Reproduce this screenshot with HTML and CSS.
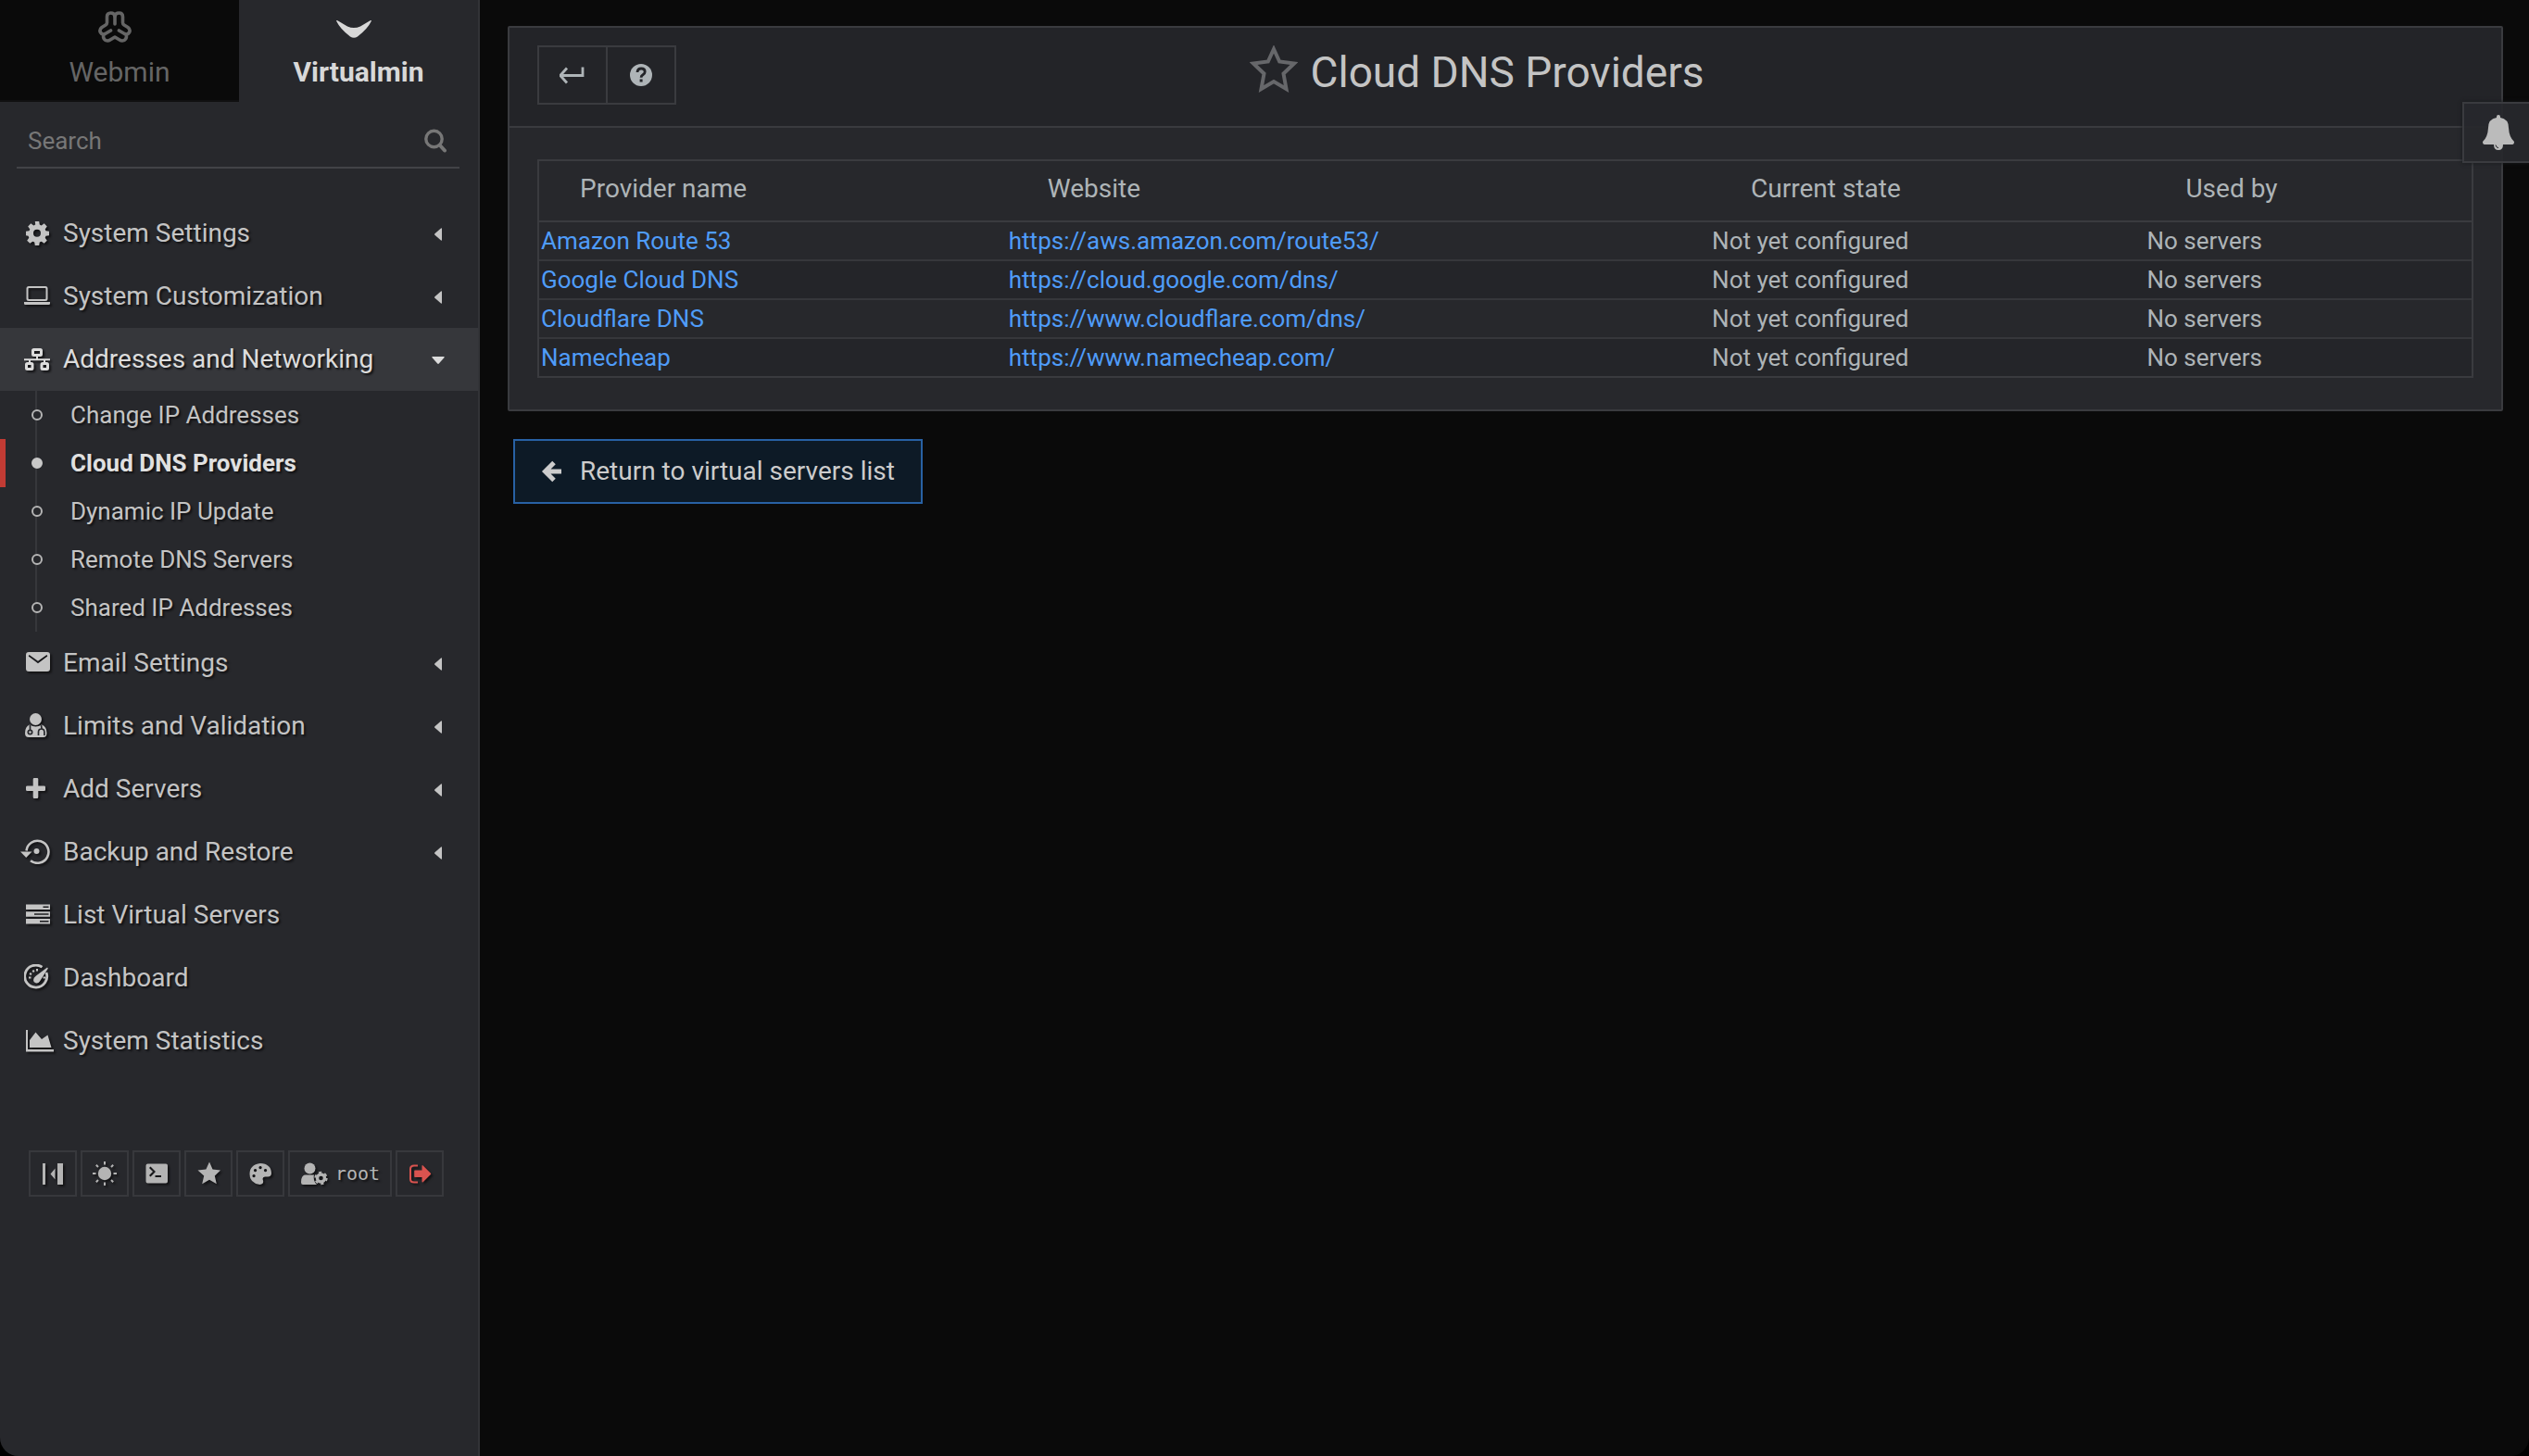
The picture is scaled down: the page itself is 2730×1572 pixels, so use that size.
FILE: index.html
```html
<!DOCTYPE html>
<html lang="en">
<head>
<meta charset="utf-8">
<title>Cloud DNS Providers</title>
<link rel="stylesheet" href="styles.css">
</head>
<body>
<svg class="sprite" aria-hidden="true">
  <symbol id="caret-left" viewBox="0 0 8 14"><path d="M8 1v12q0 1-1 .6L.4 7.8q-.7-.8 0-1.600L7 .4Q8 0 8 1z"/></symbol>
  <symbol id="caret-down" viewBox="0 0 14 8"><path d="M1 0h12q1 0 .6 1L7.800 7.600q-.8.700-1.600 0L.4 1Q0 0 1 0z"/></symbol>
</svg>
<div class="app">
  <aside class="sidebar">
    <nav class="tabs" aria-label="Products">
      <a class="tab" href="#webmin">
        <svg class="tab-icon" viewBox="0 0 36 34"><g fill="none" stroke="currentColor" stroke-width="3.600" stroke-linecap="round" stroke-linejoin="round"><path d="M18 14V5.500Q17.500 2 13.500 2 9.500 2 9.500 6v6.500Q9.500 14 8 15l-4 2.500Q.8 20 2.500 23t5 1.500l6-3.500"/><path d="M18 5.500Q18.500 2 22.500 2t4 4v6.500Q26.500 14 28 15l4 2.500q3.200 2.500 1.500 5.500t-5 1.500l-6-3.500"/><path d="M5.500 25.500Q5 31.500 10 32q1.500 0 3-1l5-3 5 3q1.500 1 3 1 5-.500 4.500-6.500"/></g></svg>
        <span>Webmin</span>
      </a>
      <a class="tab tab-active" href="#virtualmin" aria-current="page">
        <svg class="tab-icon" viewBox="0 0 38 34"><path fill="currentColor" d="M0 10.500Q0 9.500 1.500 10.200L12 16.500q7 3 14 0L36.500 10.200Q38 9.500 38 10.500 34 19 23 27.500q-4 2.500-8 0Q4 19 0 10.500z"/></svg>
        <span>Virtualmin</span>
      </a>
    </nav>
    <form class="search" role="search">
      <input class="search-input" type="search" placeholder="Search" aria-label="Search">
      <svg class="search-icon" viewBox="0 0 24 26"><g fill="none" stroke="currentColor" stroke-linecap="round"><circle cx="10.500" cy="11" r="8.700" stroke-width="3.400"/><path d="M17 18l5 5.500" stroke-width="4"/></g></svg>
    </form>
    <nav class="menu" aria-label="Virtualmin">
      <a class="item" href="#system-settings"><svg class="icon" viewBox="0 0 28 28"><path fill-rule="evenodd" d="M11.800 2h4.400l.6 3.600 1.900.8 3-2.100 3.100 3.100-2.100 3 .8 1.900 3.500.5v4.400l-3.500.6-.8 1.900 2.100 3-3.100 3.100-3-2.100-1.900.8-.6 3.500h-4.400l-.6-3.500-1.900-.8-3 2.100-3.100-3.100 2.100-3-.8-1.900L2 17.200v-4.400l3.500-.5.8-1.900-2.100-3 3.100-3.100 3 2.100 1.900-.8zM14 10.800a4 4 0 1 0 0 8 4 4 0 0 0 0-8z"/></svg><span>System Settings</span><svg class="caret"><use href="#caret-left"/></svg></a>
      <a class="item" href="#system-customization"><svg class="icon" viewBox="0 0 28 28"><path fill-rule="evenodd" d="M5 4h18q2.500 0 2.500 2.500v11q0 2.500-2.500 2.500H5q-2.500 0-2.500-2.500v-11Q2.500 4 5 4zm.2 2q-.7 0-.7.700v10.600q0 .7.7.7h17.600q.7 0 .7-.7V6.700q0-.7-.7-.7zM0 21h28v2q0 1-1.500 1h-25Q0 24 0 23z"/></svg><span>System Customization</span><svg class="caret"><use href="#caret-left"/></svg></a>
      <a class="item item-open" href="#addresses"><svg class="icon" viewBox="0 0 28 28"><g fill="none" stroke="currentColor"><rect x="9.500" y="4.500" width="9" height="6" rx="1" stroke-width="3"/><rect x="2.500" y="19.500" width="6.500" height="6" rx="1" stroke-width="3"/><rect x="19" y="19.500" width="6.500" height="6" rx="1" stroke-width="3"/><path d="M0 15.200h28M14 11.500v4M6 15v4M22 15v4" stroke-width="2"/></g></svg><span>Addresses and Networking</span><svg class="caret caret-open"><use href="#caret-down"/></svg></a>
      <ul class="submenu">
        <li><a class="subitem" href="#change-ip">Change IP Addresses</a></li>
        <li><a class="subitem subitem-active" href="#cloud-dns" aria-current="page">Cloud DNS Providers</a></li>
        <li><a class="subitem" href="#dynamic-ip">Dynamic IP Update</a></li>
        <li><a class="subitem" href="#remote-dns">Remote DNS Servers</a></li>
        <li><a class="subitem" href="#shared-ip">Shared IP Addresses</a></li>
      </ul>
      <a class="item" href="#email"><svg class="icon" viewBox="0 0 28 28"><path fill-rule="evenodd" d="M5 3h20q3 0 3 3v15q0 3-3 3H5q-3 0-3-3V6q0-3 3-3zm.5 3L4.700 7.500 15 15.200 25.300 7.500 24.500 6 15 12.700z"/></svg><span>Email Settings</span><svg class="caret"><use href="#caret-left"/></svg></a>
      <a class="item" href="#limits"><svg class="icon" viewBox="0 0 28 28"><circle cx="12.500" cy="7.500" r="6.500"/><path d="M6 13.500q6.500 4 13 0 5.500 2 5.500 9 0 4.500-4 4.500H5q-4 0-4-4.500 0-7 5-9z"/><g fill="none" stroke="#27282c" stroke-width="1.700"><path d="M6.500 14v5.500M18.500 14l.5 3.500M15.500 25v-3.500q0-3.500 3.200-3.500t3.200 3.500V25"/><circle cx="6.500" cy="21.500" r="2.200"/></g></svg><span>Limits and Validation</span><svg class="caret"><use href="#caret-left"/></svg></a>
      <a class="item" href="#add-servers"><svg class="icon" viewBox="0 0 28 28"><path d="M11 3h3q1.300 0 1.300 1.300v7.200h6.200q1.500 0 1.500 1.300v3q0 1.200-1.500 1.200h-6.200v6.500q0 1.500-1.300 1.500h-3q-1.300 0-1.300-1.500V17H3.500Q2 17 2 15.800v-3q0-1.300 1.500-1.300h6.200V4.300Q9.700 3 11 3z"/></svg><span>Add Servers</span><svg class="caret"><use href="#caret-left"/></svg></a>
      <a class="item" href="#backup"><svg class="icon icon-wide" viewBox="0 0 32 28"><path d="M6.500 13.500A12 12 0 1 1 11 24.200" fill="none" stroke="currentColor" stroke-width="2.600"/><path d="M0 14.500h12.500L6.200 21z"/><circle cx="17.500" cy="14" r="3"/></svg><span>Backup and Restore</span><svg class="caret"><use href="#caret-left"/></svg></a>
      <a class="item" href="#list"><svg class="icon" viewBox="0 0 28 28"><path fill-rule="evenodd" d="M2 3.500h26v5.500H2zm18.500 2v1.500h6V5.500zM2 11.200h26v5.500H2zm9 2v1.500h15.500v-1.500zM2 18.900h26v5.500H2zm15 2v1.500h9.500v-1.500z"/></svg><span>List Virtual Servers</span></a>
      <a class="item" href="#dashboard"><svg class="icon" viewBox="0 0 28 28"><path d="M19.500 3.200A12 12 0 1 0 24 9" fill="none" stroke="currentColor" stroke-width="2.800"/><path d="M25 3.500q1.200.5.600 1.500L17 18.500q-2 3-5 1.500t-1.300-5Q11 14 13 12.500z"/><path d="M5 14.500h2.500M6 10l2 1M9.500 6.500l1.200 2M14 5v2.400M20.500 14.500H23" fill="none" stroke="currentColor" stroke-width="2"/></svg><span>Dashboard</span></a>
      <a class="item" href="#stats"><svg class="icon icon-chart" viewBox="0 0 32 28"><path d="M2 3h2v21h28v2.500H2zM6 22V14L12.500 5.500 19 13l6.500-4.500L29.500 22z"/></svg><span>System Statistics</span></a>
    </nav>
    <div class="tools">
      <button class="tool" type="button" aria-label="Collapse menu"><svg viewBox="0 0 26 26"><path d="M2 2h3v23H2zM18 2h6v23h-6zM15.500 7.500v12L10.500 13.500z"/></svg></button>
      <button class="tool" type="button" aria-label="Light mode"><svg viewBox="0 0 26 26"><circle cx="13" cy="13" r="7.200"/><path d="M13 0v3.500M13 22.500V26M0 13h3.500M22.500 13H26M3.800 3.800L6 6M20 20l2.200 2.200M22.200 3.800L20 6M6 20l-2.200 2.200" fill="none" stroke="currentColor" stroke-width="2"/></svg></button>
      <button class="tool" type="button" aria-label="Terminal"><svg viewBox="0 0 26 26"><path fill-rule="evenodd" d="M3.500 2.500H23q2 0 2 2v17q0 2-2 2H3.500q-2 0-2-2v-17q0-2 2-2zM5 7L9 11l-4 4L6.500 16.500 12 11 6.500 5.500zM11.500 15v2h6.500v-2z"/></svg></button>
      <button class="tool" type="button" aria-label="Favorites"><svg viewBox="0 0 26 26"><path d="M14 .5l3.600 8 8.400.9-6.200 6 2 8.800L14 19.700 6.200 24.200l2-8.800-6.700-6 8.900-.9z"/></svg></button>
      <button class="tool" type="button" aria-label="Theme"><svg viewBox="0 0 26 26"><path fill-rule="evenodd" d="M13 2q11.500.5 12 10.500 0 4-4 4h-3q-3.500.5-2 4 1 4-3.500 4.500Q1.500 23.500 1.500 13.500T13 2zM6 14a1.600 1.600 0 1 0 .1 0zM7.500 8a1.600 1.600 0 1 0 .1 0zM13 5a1.600 1.600 0 1 0 .1 0zM18.500 8a1.600 1.600 0 1 0 .1 0z"/></svg></button>
      <button class="tool tool-user" type="button"><svg class="user-icon" viewBox="0 0 30 26"><circle cx="10.500" cy="7.500" r="6"/><path d="M6 14.500h9q-1.500 6 3 10.500H3q-2 0-2-2.500 0-8 5-8z"/><circle cx="22.500" cy="18" r="4" fill="none" stroke="currentColor" stroke-width="3.400"/><circle cx="22.500" cy="18" r="6.200" fill="none" stroke="currentColor" stroke-width="2" stroke-dasharray="3.200 3.290"/></svg><span>root</span></button>
      <button class="tool tool-logout" type="button" aria-label="Log out"><svg viewBox="0 0 26 26"><path d="M11 4.500H7Q3 4.500 3 8v11q0 3.500 4 3.500h4" fill="none" stroke="currentColor" stroke-width="2"/><path d="M8 9.500h7.500V5q0-1.500 1.200-.6l8 8q1 .9 0 1.800l-8 8q-1.200 1-1.200-.6v-4.500H8q-.8 0-.8-.8v-6q0-.8.8-.8z"/></svg></button>
    </div>
  </aside>

  <main class="content">
    <section class="panel">
      <header class="panel-head">
        <div class="actions">
          <button class="action" type="button" aria-label="Back"><svg viewBox="0 0 28 24"><path d="M25 3.500v9H0M8 4.500L.8 12.500l7.200 8" fill="none" stroke="currentColor" stroke-width="2.800"/></svg></button>
          <button class="action" type="button" aria-label="Help"><svg viewBox="0 0 28 24"><circle cx="14" cy="12" r="12"/><path d="M10 9q.3-4 4.200-4 4 0 4 3.400 0 2-2.200 3.300-1.900 1.100-1.900 3.100" fill="none" stroke="#232428" stroke-width="2.800"/><path d="M12.600 16.500h3v3h-3z" fill="#232428"/></svg></button>
        </div>
        <h1 class="title"><svg class="star" viewBox="0 0 52 52"><path d="M26 4l6.200 13.500 15.800 2L36.500 30.500l3 16.500-13.500-8-13.500 8 3-16.500L4 19.500l15.800-2z" fill="none" stroke="currentColor" stroke-width="4"/></svg><span>Cloud DNS Providers</span></h1>
      </header>
      <div class="panel-body">
        <table class="providers">
          <colgroup><col class="c-name"><col class="c-site"><col class="c-state"><col class="c-used"></colgroup>
          <thead><tr><th scope="col">Provider name</th><th scope="col">Website</th><th scope="col">Current state</th><th scope="col">Used by</th></tr></thead>
          <tbody>
            <tr><td><a href="#route53">Amazon Route 53</a></td><td><a href="https://aws.amazon.com/route53/">https://aws.amazon.com/route53/</a></td><td>Not yet configured</td><td>No servers</td></tr>
            <tr><td><a href="#google">Google Cloud DNS</a></td><td><a href="https://cloud.google.com/dns/">https://cloud.google.com/dns/</a></td><td>Not yet configured</td><td>No servers</td></tr>
            <tr><td><a href="#cloudflare">Cloudflare DNS</a></td><td><a href="https://www.cloudflare.com/dns/">https://www.cloudflare.com/dns/</a></td><td>Not yet configured</td><td>No servers</td></tr>
            <tr><td><a href="#namecheap">Namecheap</a></td><td><a href="https://www.namecheap.com/">https://www.namecheap.com/</a></td><td>Not yet configured</td><td>No servers</td></tr>
          </tbody>
        </table>
      </div>
    </section>
    <a class="return" href="#servers"><svg class="return-icon" viewBox="0 0 24 24"><path d="M14 2.500L4.500 12l9.500 9.500M5.500 12H22" fill="none" stroke="currentColor" stroke-width="5"/></svg><span>Return to virtual servers list</span></a>
  </main>
  <button class="bell" type="button" aria-label="Notifications"><svg viewBox="0 0 34 38"><path d="M17 0q2 0 2 2v1q9 1.500 9 11 .5 10 6 15 0 3-2 3H22q0 6-5 6t-5-6H2q-2 0-2-3 5.500-5 6-15 0-9.500 9-11V2q0-2 2-2z"/><path d="M14 32.500q.3 2.700 3 3.200" fill="none" stroke="#27282c" stroke-width="1"/></svg></button>
</div>
</body>
</html>
```
FILE: styles.css
```css
*, *::before { box-sizing: border-box; }
body { margin: 0; background: #000; color: #aeb4b7; font: 26px/40px Roboto, sans-serif; }
a { color: inherit; text-decoration: none; }
button { font: inherit; color: inherit; background: none; border: 2px solid #3a3b3f; border-radius: 0; padding: 0; margin: 0; }
svg { fill: currentColor; display: block; flex: none; }
.sprite { position: absolute; width: 0; height: 0; }
.app { display: flex; min-height: 100vh; background: #0a0a0a; border-radius: 0 0 20px 20px; overflow: hidden; }

.sidebar { width: 518px; flex: none; background: #27282c; border-right: 2px solid #323337; color: #c4c4c4; }
.tabs { display: flex; height: 110px; }
.tab { flex: 1; display: flex; flex-direction: column; align-items: center; padding-top: 12px; gap: 12px; background: #0a0a0a; color: #656565; font-size: 30px; border-bottom: 2px solid #101011; }
.tab-active { background: none; color: #d8d8d8; font-weight: 700; border-color: transparent; }
.tab-icon { width: 38px; height: 34px; margin-right: 10px; }
.search { display: flex; align-items: center; margin: 0 20px 0 18px; height: 72px; padding: 14px 14px 0 12px; border-bottom: 2px solid #424347; }
.search-input { flex: 1; min-width: 0; padding: 0; border: 0; outline: 0; background: none; color: #c4c4c4; font: 26px/40px Roboto, sans-serif; }
.search-input::placeholder { color: #777; opacity: 1; }
.search-icon { width: 24px; height: 26px; color: #777; }
.menu { padding-top: 36px; text-shadow: 2px 2px 2px #121214; }
.item { display: flex; align-items: center; height: 68px; padding: 0 36px 0 26px; font-size: 28px; }
.item > span { flex: 1; }
.item-open { background: #36373b; color: #dcdcdc; }
.icon { width: 28px; height: 28px; margin: 0 14px 2px 0; filter: drop-shadow(2px 2px 1px #121214); }
.icon-wide { width: 32px; margin-left: -4px; }
.icon-chart { width: 32px; margin-right: 10px; }
.caret { width: 8px; height: 14px; margin: 2px 3px 0 0; }
.caret-open { width: 14px; height: 8px; margin-right: 0; }
.submenu { list-style: none; margin: 0; padding: 0; background: linear-gradient(#36373b, #36373b) 38px 0 / 2px 100% no-repeat; }
.subitem { display: flex; align-items: center; height: 52px; padding-left: 34px; gap: 30px; }
.subitem::before { content: ""; width: 12px; height: 12px; border: 2px solid #b4b4b4; border-radius: 50%; background: #27282c; }
.subitem-active { color: #e0e0e0; font-weight: 700; box-shadow: inset 6px 0 #c13b34; }
.subitem-active::before { background: #c8c8c8; border-color: #c8c8c8; }
.tools { display: flex; gap: 4px; margin: 84px 0 0 31px; color: #b4b4b4; }
.tool { width: 52px; height: 50px; display: flex; align-items: center; justify-content: center; border-color: #37383c; }
.tool svg { width: 26px; height: 26px; filter: drop-shadow(2px 2px 1px #121214); }
.tool-user { width: 112px; gap: 8px; font: 20px/24px "DejaVu Sans Mono", monospace; text-shadow: 2px 2px 2px #121214; }
.tool .user-icon { width: 30px; }
.tool-logout { color: #d9534f; }

.content { flex: 1; min-width: 0; padding: 28px 28px 0 30px; }
.panel { border: 2px solid #3a3b3f; border-radius: 2px; background: #27282c; }
.panel-head { display: grid; grid-template-columns: 1fr auto 1fr; align-items: start; height: 108px; padding: 19px 30px 0; background: #232428; border-bottom: 2px solid #3a3b3f; }
.actions { display: flex; }
.action { width: 76px; height: 64px; display: flex; align-items: center; justify-content: center; }
.action + .action { margin-left: -2px; }
.action svg { width: 28px; height: 24px; }
.title { display: flex; align-items: flex-start; gap: 14px; margin: 0 0 0 -62px; font-size: 46px; line-height: 58px; font-weight: 400; color: #c4c4c4; }
.star { width: 52px; height: 52px; color: #66676a; }
.panel-body { padding: 34px 30px; }
.providers { width: 100%; table-layout: fixed; border-collapse: separate; border-spacing: 0; border: 2px solid #3a3b3f; }
.c-name { width: 24.2%; }
.c-site { width: 36.4%; }
.c-state { width: 22.5%; }
.providers th { height: 66px; padding: 0 0 4px 44px; font-size: 28px; font-weight: 400; text-align: left; border-bottom: 2px solid #3a3b3f; }
.providers td { height: 42px; padding: 0 2px; line-height: 40px; border-bottom: 2px solid #36373b; }
.providers tr:last-child td { height: 40px; border-bottom: 0; }
.providers tbody tr:nth-child(even) { background: #242529; }
.providers a { color: #4f9cf9; }
.return { display: inline-flex; align-items: center; gap: 18px; height: 70px; margin: 30px 0 0 6px; padding: 0 28px; border: 2px solid #2861a4; background: #0d1a26; color: #ccc; font-size: 28px; }
.return-icon { width: 24px; height: 24px; }
.bell { position: absolute; top: 110px; right: 0; width: 72px; height: 66px; padding-left: 4px; display: flex; align-items: center; justify-content: center; border-right: 0; background: #27282cf2; color: #bbb; box-shadow: 0 0 4px #18191c; }
.bell svg { width: 34px; height: 38px; }
```
